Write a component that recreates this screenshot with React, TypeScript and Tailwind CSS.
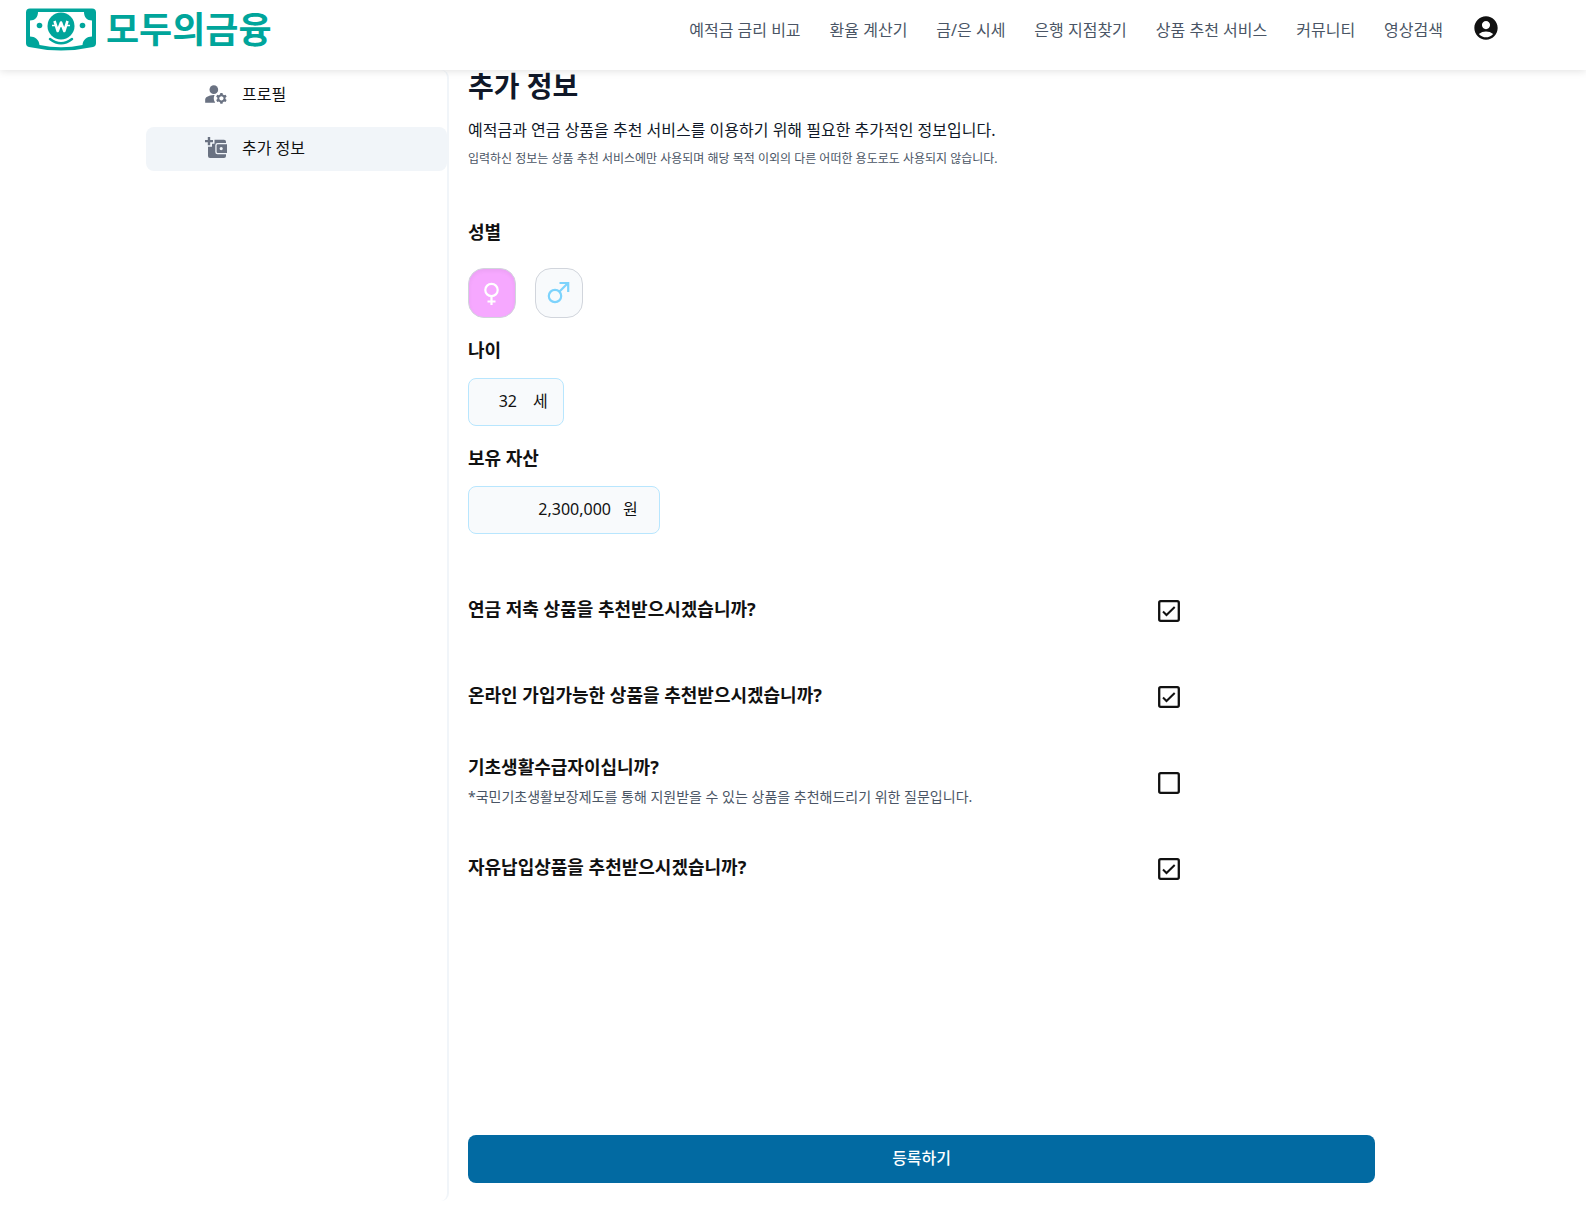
import { useState } from 'react'
import type { ReactNode } from 'react'
import { MdAccountCircle, MdManageAccounts } from 'react-icons/md'

const NAV_ITEMS = [
  '예적금 금리 비교',
  '환율 계산기',
  '금/은 시세',
  '은행 지점찾기',
  '상품 추천 서비스',
  '커뮤니티',
  '영상검색',
]

function Logo() {
  return (
    <a href="#home" className="flex items-center gap-[9px] text-[#00a59b]">
      <svg width="72" height="44" viewBox="0 0 72 44" aria-hidden="true">
        <path
          d="M5 .5h62a4 4 0 0 1 4 4V35a4 4 0 0 1-3 4Q36 46 4 39a4 4 0 0 1-3-4V4.500a4 4 0 0 1 4-4z"
          fill="currentColor"
        />
        <path
          d="M13 4h46c0 5 3 8.500 8 8.500v16c-5 0-9 3-9.500 8.500Q36 41.500 14.500 37C14 31.500 10 28.500 5 28.500v-16c5 0 8-3.500 8-8.500z"
          fill="#fff"
        />
        <circle cx="36" cy="18" r="13.500" fill="currentColor" />
        <path d="M25 31Q36 39.500 47 31" fill="none" stroke="currentColor" strokeWidth="2.500" strokeLinecap="round" />
        <circle cx="14.500" cy="17.500" r="2.800" fill="currentColor" />
        <circle cx="57.500" cy="17.500" r="2.800" fill="currentColor" />
        <path
          d="M29.500 13l3.200 10L36 14.500l3.300 8.500 3.200-10"
          fill="none"
          stroke="#fff"
          strokeWidth="2.600"
          strokeLinejoin="round"
        />
        <path d="M27 17.500h4M41 17.500h4" stroke="#fff" strokeWidth="1.500" />
      </svg>
      <span className="text-4xl leading-10 font-bold">모두의금융</span>
    </a>
  )
}

function WalletPlusIcon() {
  return (
    <svg width="24" height="24" viewBox="0 0 24 24" aria-hidden="true" fill="currentColor">
      <path d="M3.800 1h2.400v3H9v2.200H6.200v3H3.800v-3H1V4h2.800z" />
      <path d="M10.500 3.800H20a2 2 0 0 1 2 2V7h-8.500a2.200 2.200 0 0 0-2.200 2.200v6.800a2.200 2.200 0 0 0 2.200 2.200H22v1.800a2 2 0 0 1-2 2H6a2 2 0 0 1-2-2v-9.300h4V7.800h2.500z" />
      <path
        fillRule="evenodd"
        d="M13.800 8.200H23V17h-9.200a1.200 1.200 0 0 1-1.200-1.200V9.400a1.200 1.200 0 0 1 1.200-1.200zm3.400 2.800a1.600 1.600 0 1 0 0 3.200 1.600 1.600 0 0 0 0-3.200z"
      />
    </svg>
  )
}

function FemaleIcon() {
  return (
    <svg width="24" height="24" viewBox="0 0 24 24" aria-hidden="true" fill="none" stroke="currentColor" strokeWidth="2.200">
      <circle cx="11.500" cy="9" r="6.200" />
      <path d="M11.500 15v9M7.500 20.500h8" />
    </svg>
  )
}

function MaleIcon() {
  return (
    <svg width="24" height="24" viewBox="0 0 24 24" aria-hidden="true" fill="none" stroke="currentColor" strokeWidth="2.200">
      <circle cx="8" cy="15" r="6.200" />
      <path d="M12.300 10.700L21 2M12.500 2H21.200v9" />
    </svg>
  )
}

function CheckBoxIcon({ checked }: { checked: boolean }) {
  return (
    <svg width="28" height="28" viewBox="0 0 28 28" aria-hidden="true" fill="none" stroke="currentColor">
      <rect x="4.200" y="4.200" width="19.600" height="19.600" rx="1.500" strokeWidth="2.300" />
      {checked && <path d="M8 14.500l3.500 3.500 8.200-8" strokeWidth="2" />}
    </svg>
  )
}

function SideItem({ icon, label, active = false }: { icon: ReactNode; label: string; active?: boolean }) {
  return (
    <a
      href="#menu"
      className={`flex h-11 items-center gap-3 rounded-lg pb-0.5 pl-14 ${active ? 'bg-slate-100' : ''}`}
    >
      <span className="flex w-7 justify-center text-gray-500">{icon}</span>
      <span>{label}</span>
    </a>
  )
}

function Question({ title, note, initial }: { title: string; note?: string; initial: boolean }) {
  const [checked, setChecked] = useState(initial)
  return (
    <label className="flex h-[86px] cursor-pointer items-center justify-between">
      <span className="flex flex-col gap-1 pb-1">
        <span className="text-lg leading-7 font-bold">{title}</span>
        {note && <span className="text-sm leading-6 text-gray-600">{note}</span>}
      </span>
      <span className="flex pr-0.5">
        <input
          type="checkbox"
          className="sr-only"
          checked={checked}
          onChange={(e) => setChecked(e.target.checked)}
        />
        <CheckBoxIcon checked={checked} />
      </span>
    </label>
  )
}

export default function App() {
  const [gender, setGender] = useState('female')
  const [age, setAge] = useState('32')
  const [asset, setAsset] = useState('2,300,000')

  return (
    <div
      lang="ko"
      className="min-h-screen bg-white font-['Noto_Sans','Noto_Sans_CJK_KR',sans-serif] text-base text-[#111111]"
    >
      <header className="relative flex h-[70px] items-start justify-between bg-white pr-[86px] pl-[25px] shadow-[0_1px_8px_rgba(0,0,0,0.12)]">
        <div className="pt-2">
          <Logo />
        </div>
        <nav className="flex items-start gap-[29px] pt-[14px] text-gray-600">
          {NAV_ITEMS.map((item) => (
            <a key={item} href="#nav" className="pt-1 leading-6 whitespace-nowrap">
              {item}
            </a>
          ))}
          <button type="button" aria-label="내 계정" className="text-[#111111]">
            <MdAccountCircle size={28} />
          </button>
        </nav>
      </header>

      <div className="ml-[146px] flex pb-[18px]">
        <aside className="flex w-[303px] shrink-0 flex-col gap-[10px] rounded-lg border-r-2 border-slate-100 pt-[3px]">
          <SideItem icon={<MdManageAccounts size={26} />} label="프로필" />
          <SideItem icon={<WalletPlusIcon />} label="추가 정보" active />
        </aside>

        <main className="ml-[19px] flex w-[63%] flex-col pb-[18px]">
          <h1 className="text-[28px] leading-8 font-bold text-gray-900">추가 정보</h1>
          <p className="mt-4 leading-6 text-gray-900">
            예적금과 연금 상품을 추천 서비스를 이용하기 위해 필요한 추가적인 정보입니다.
          </p>
          <p className="mt-2 text-xs leading-[18px] text-gray-600">
            입력하신 정보는 상품 추천 서비스에만 사용되며 해당 목적 이외의 다른 어떠한 용도로도 사용되지 않습니다.
          </p>

          <h2 className="mt-[50px] text-lg leading-7 font-bold">성별</h2>
          <div className="mt-[22px] flex gap-[19px]">
            <button
              type="button"
              aria-label="여성"
              aria-pressed={gender === 'female'}
              onClick={() => setGender('female')}
              className={`flex h-[50px] w-12 items-center justify-center rounded-2xl border border-gray-300 ${gender === 'female' ? 'bg-[#f6a8ff] text-white inset-shadow-sm' : 'bg-slate-50 text-[#f6a8ff]'}`}
            >
              <FemaleIcon />
            </button>
            <button
              type="button"
              aria-label="남성"
              aria-pressed={gender === 'male'}
              onClick={() => setGender('male')}
              className={`flex h-[50px] w-12 items-center justify-center rounded-2xl border border-gray-300 ${gender === 'male' ? 'bg-[#7dd3fc] text-white inset-shadow-sm' : 'bg-slate-50 text-[#7dd3fc]'}`}
            >
              <MaleIcon />
            </button>
          </div>

          <label htmlFor="age" className="mt-[18px] text-lg leading-7 font-bold">
            나이
          </label>
          <div className="mt-[14px] flex h-12 w-24 items-center rounded-lg border border-sky-200 bg-slate-50 pb-0.5">
            <input
              id="age"
              value={age}
              onChange={(e) => setAge(e.target.value)}
              className="w-12 bg-transparent text-right outline-none"
            />
            <span className="ml-4">세</span>
          </div>

          <label htmlFor="asset" className="mt-[18px] text-lg leading-7 font-bold">
            보유 자산
          </label>
          <div className="mt-[14px] flex h-12 w-48 items-center rounded-lg border border-sky-200 bg-slate-50 pb-0.5">
            <input
              id="asset"
              value={asset}
              onChange={(e) => setAsset(e.target.value)}
              className="w-[142px] bg-transparent text-right outline-none"
            />
            <span className="ml-3">원</span>
          </div>

          <div className="mt-[34px] flex w-[79%] flex-col">
            <Question title="연금 저축 상품을 추천받으시겠습니까?" initial />
            <Question title="온라인 가입가능한 상품을 추천받으시겠습니까?" initial />
            <Question
              title="기초생활수급자이십니까?"
              note="*국민기초생활보장제도를 통해 지원받을 수 있는 상품을 추천해드리기 위한 질문입니다."
              initial={false}
            />
            <Question title="자유납입상품을 추천받으시겠습니까?" initial />
          </div>

          <button
            type="button"
            className="mt-[223px] h-12 rounded-lg bg-[#026aa2] pb-0.5 font-medium text-white"
          >
            등록하기
          </button>
        </main>
      </div>
    </div>
  )
}
